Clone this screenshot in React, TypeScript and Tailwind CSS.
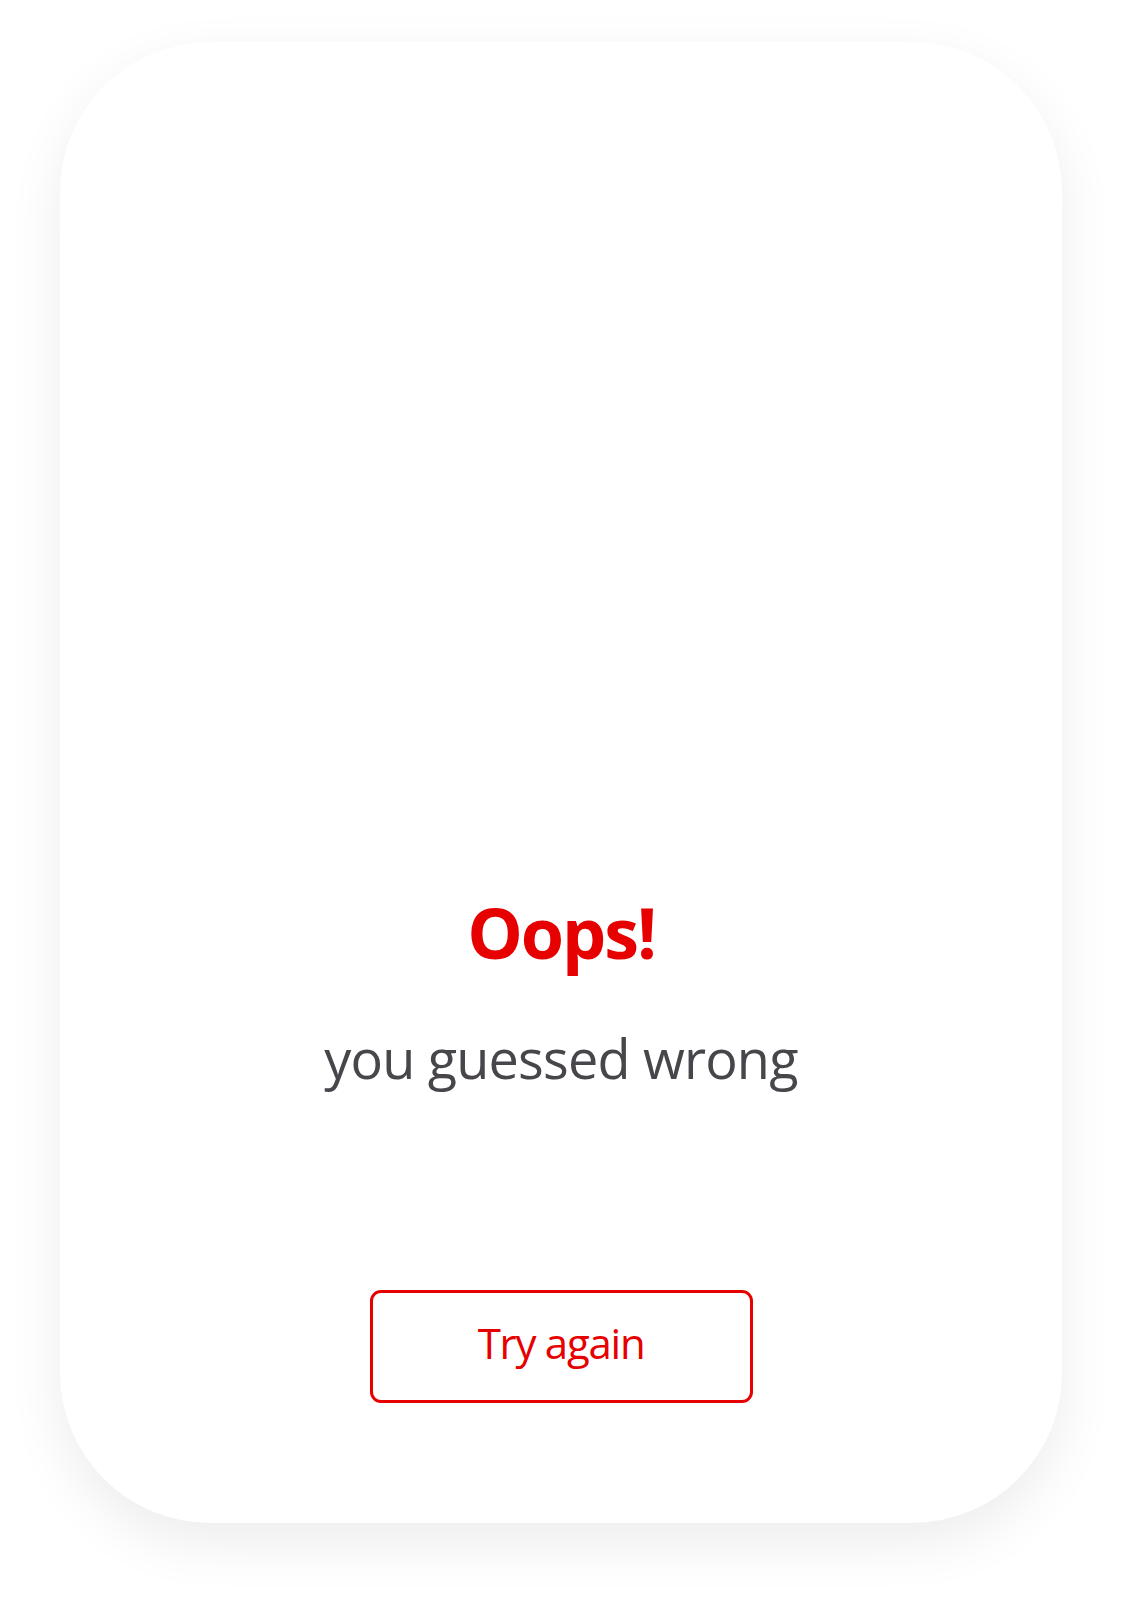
export default function App() {
  return (
    <div className="min-h-[1602px] w-full bg-white pt-[42px] px-[60px] pb-[79px] font-['Open_Sans',sans-serif]">
      <div className="flex h-[1481px] flex-col items-center justify-end rounded-[150px] bg-white pb-[120px] shadow-[0_20px_55px_rgba(0,0,0,0.075)]">
        <h1 className="text-[70px] font-bold leading-none tracking-[-0.03em] text-[#e60000]">Oops!</h1>
        <p className="mt-[64px] text-[54px] leading-none tracking-[-0.015em] text-[#48454b]">you guessed wrong</p>
        <button className="mt-[205px] h-[113px] w-[383px] rounded-[11px] border-[3px] border-[#e60000] pb-[8px] text-[42px] tracking-[-0.03em] text-[#e60000]">
          Try again
        </button>
      </div>
    </div>
  );
}
